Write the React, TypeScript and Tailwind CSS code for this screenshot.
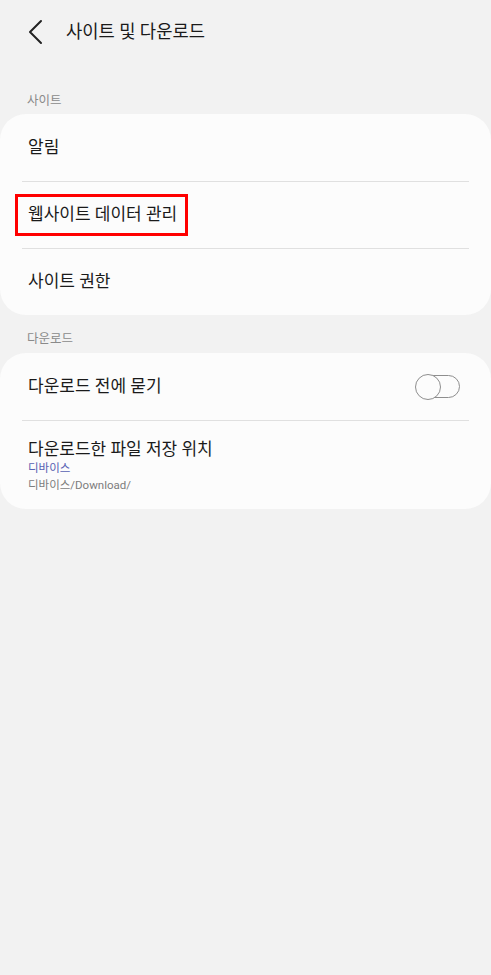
import React from 'react';

const font = { fontFamily: 'Roboto, "Noto Sans CJK KR", sans-serif' };

const Divider = () => <div className="mx-[22px] h-px bg-[#e0e0e0]" />;

const SectionLabel = ({ text, className = '' }: { text: string; className?: string }) => (
  <div className={`px-[27px] text-[12.5px] leading-[16px] text-[#8a8a8a] ${className}`}>{text}</div>
);

const Toggle = () => (
  <div className="relative w-[45px] h-[26px]">
    <div className="absolute left-[1px] right-0 top-[1.5px] bottom-[1.5px] rounded-full border-[1.5px] border-[#8e8e8e]" />
    <div className="absolute left-0 top-0 w-[26px] h-[26px] rounded-full border-[1.5px] border-[#8e8e8e] bg-[#fcfcfc]" />
  </div>
);

export default function App() {
  return (
    <div className="min-h-[975px] w-full bg-[#f2f2f2] text-[#1a1a1a]" style={font}>
      <div className="flex h-[64px] items-center">
        <svg className="ml-[27px] h-[26px] w-[18px]" viewBox="0 0 18 26" fill="none">
          <path d="M14 2 L3 13 L14 24" stroke="#222" strokeWidth="2" strokeLinecap="round" strokeLinejoin="round" />
        </svg>
        <h1 className="ml-[21px] text-[17.7px] font-normal">사이트 및 다운로드</h1>
      </div>

      <SectionLabel text="사이트" className="mt-[29px]" />
      <div className="mt-[5px] rounded-[26px] bg-[#fcfcfc]">
        <div className="flex h-[67px] items-center px-[28px] text-[17px]">알림</div>
        <Divider />
        <div className="relative flex h-[66px] items-center px-[28px] text-[17px]">
          웹사이트 데이터 관리
          <div className="absolute left-[15px] top-[12px] h-[42px] w-[173px] border-[3px] border-[#ff0000]" />
        </div>
        <Divider />
        <div className="flex h-[66px] items-center px-[28px] text-[17px]">사이트 권한</div>
      </div>

      <SectionLabel text="다운로드" className="mt-[16px]" />
      <div className="mt-[6px] rounded-[26px] bg-[#fcfcfc]">
        <div className="flex h-[67px] items-center justify-between pl-[28px] pr-[31px] text-[17px]">
          <span>다운로드 전에 묻기</span>
          <Toggle />
        </div>
        <Divider />
        <div className="px-[28px] pt-[17px] pb-[15px]">
          <div className="text-[17px] leading-[22px]">다운로드한 파일 저장 위치</div>
          <div className="text-[11.5px] leading-[17px] text-[#5861b3]">디바이스</div>
          <div className="text-[11.5px] leading-[17px] text-[#7d7d7d]">디바이스/Download/</div>
        </div>
      </div>
    </div>
  );
}
